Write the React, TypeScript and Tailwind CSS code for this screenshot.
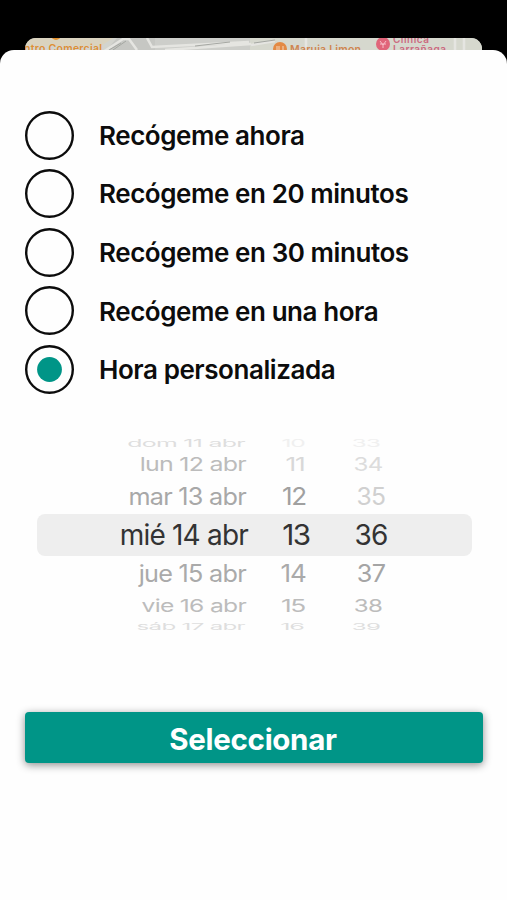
import React, { useState } from 'react';
import clsx from 'clsx';

const options = [
  'Recógeme ahora',
  'Recógeme en 20 minutos',
  'Recógeme en 30 minutos',
  'Recógeme en una hora',
  'Hora personalizada',
];

// Rows get shorter and flatter towards the edges of the wheel
const wheelRows = [
  { day: 'dom 11 abr', hour: '10', minute: '33', row: 'h-[14px]', dayClass: 'scale-x-[0.89] scale-y-[0.38] -translate-x-[3px] text-[#dedede]', hourClass: 'scale-x-[0.88] scale-y-[0.38] -translate-x-[3px] text-[#f0f0f0]', minuteClass: 'scale-x-[0.86] scale-y-[0.38] -translate-x-[5px] text-[#f0f0f0]' },
  { day: 'lun 12 abr', hour: '11', minute: '34', row: 'h-7', dayClass: 'scale-x-[0.89] scale-y-[0.66] -translate-x-0.5 text-[#bcbcbc]', hourClass: 'scale-x-[0.94] scale-y-[0.66] -translate-x-px text-[#d8d8d8]', minuteClass: 'scale-x-[0.86] scale-y-[0.66] -translate-x-[3px] text-[#dcdcdc]' },
  { day: 'mar 13 abr', hour: '12', minute: '35', row: 'h-9', dayClass: 'scale-x-[0.9] scale-y-[0.85] -translate-x-0.5 text-[#a8a8a8]', hourClass: 'scale-x-[0.93] scale-y-[0.85] -translate-x-[2px] text-[#a0a0a0]', minuteClass: 'scale-x-[0.88] scale-y-[0.85] text-[#d0d0d0]' },
  { day: 'mié 14 abr', hour: '13', minute: '36', row: 'h-[42px] rounded-[8px] bg-[#eeeeee]', dayClass: 'text-[#333333]', hourClass: 'scale-x-[1.06] text-[#333333]', minuteClass: 'text-[#333333]' },
  { day: 'jue 15 abr', hour: '14', minute: '37', row: 'h-9', dayClass: 'scale-x-[0.9] scale-y-[0.85] -translate-x-0.5 text-[#aaaaaa]', hourClass: 'scale-x-[0.93] scale-y-[0.85] -translate-x-[3px] text-[#aaaaaa]', minuteClass: 'scale-x-[0.9] scale-y-[0.85] text-[#a5a5a5]' },
  { day: 'vie 16 abr', hour: '15', minute: '38', row: 'h-7', dayClass: 'scale-x-[0.88] scale-y-[0.63] -translate-x-0.5 text-[#bcbcbc]', hourClass: 'scale-x-[0.94] scale-y-[0.63] -translate-x-[3px] text-[#bcbcbc]', minuteClass: 'scale-x-[0.86] scale-y-[0.63] -translate-x-[3px] text-[#bcbcbc]' },
  { day: 'sáb 17 abr', hour: '16', minute: '39', row: 'h-[14px]', dayClass: 'scale-x-[0.86] scale-y-[0.34] -translate-x-[3px] text-[#dedede]', hourClass: 'scale-x-[0.9] scale-y-[0.34] -translate-x-1 text-[#dedede]', minuteClass: 'scale-x-[0.86] scale-y-[0.34] -translate-x-[5px] text-[#dedede]' },
];

function MapStrip() {
  return (
    <svg className="block h-6 w-[457px] rounded-t-[11px]" viewBox="0 0 457 24" aria-hidden="true">
      <rect width="457" height="24" fill="#d3d4ce" />
      <path d="M0 0H88L76 8H0Z" fill="#dad3bf" />
      <path d="M92 0H225V8L138 16L80 14Z" fill="#c6c7c3" />
      <path d="M130 0H225V14H130Z" fill="#cdceca" />
      <path d="M225 0H457V24H225Z" fill="#d6d8ce" />
      <g fill="none" stroke="#e5e5e1" strokeWidth="2.5">
        <path d="M78 14L98 1H104L112 12M122 0L127 9L224 4M140 12L226 6" />
        <path d="M226 7L250 3M281 0V12M430 0V12M439 0V12" />
      </g>
      <path d="M84 12L96 5M88 12L101 3M170 8L205 4M229 5L250 2" stroke="#a5a7a2" strokeWidth="1" fill="none" />
      <circle cx="31" cy="-3" r="5" fill="#e0902f" />
      <text x="-1" y="14" fill="#de8f35" fontFamily="Inter, sans-serif" fontSize="10.5" fontWeight="600" textLength="78">ntro Comercial</text>
      <circle cx="255" cy="11" r="7" fill="#e38a45" />
      <path d="M252 8V13M254 8V13M258 8V13" stroke="#f5d6bd" />
      <text x="265" y="15" fill="#cf8550" fontFamily="Inter, sans-serif" fontSize="10.5" fontWeight="600" textLength="71">Maruja Limon</text>
      <circle cx="358" cy="6" r="7" fill="#e0657a" />
      <path d="M355 3L358 7L361 3M358 7V10M355 6H361" stroke="#f7bdc7" fill="none" />
      <g fill="#cc6a80" fontFamily="Inter, sans-serif" fontSize="10" fontWeight="600">
        <text x="368" y="4.5" textLength="36">Clínica</text>
        <text x="368" y="15" textLength="53">Larrañaga</text>
      </g>
    </svg>
  );
}

export default function App() {
  const [selected, setSelected] = useState(4);

  return (
    <div className="h-[900px] w-[507px] overflow-hidden bg-black font-['Inter',sans-serif]">
      <div className="px-[25px] pt-[38px]">
        <MapStrip />
      </div>

      <div className="relative -mt-3 h-[850px] rounded-t-[14px] bg-[#fefefe] px-[25px] pt-[60.5px]">
        <div className="flex flex-col gap-[9.65px]" role="radiogroup">
          {options.map((label, i) => (
            <button
              key={label}
              role="radio"
              aria-checked={selected === i}
              onClick={() => setSelected(i)}
              className="flex h-[49px] items-center gap-[25px] text-left"
            >
              <svg className="size-[49px] shrink-0" viewBox="0 0 49 49" aria-hidden="true">
                <circle cx="24.5" cy="24.5" r="23.3" fill="none" stroke="#0c0c0c" strokeWidth="2.4" />
                {selected === i && <circle cx="24.5" cy="24.5" r="12.4" fill="#009587" />}
              </svg>
              <span className="pt-[1.5px] text-[26px] leading-8 font-semibold tracking-[-0.43px] whitespace-nowrap text-[#0c0c0c]">
                {label}
              </span>
            </button>
          ))}
        </div>

        <div className="mr-2.5 ml-3 mt-[41.9px] h-[198px] overflow-hidden">
          {wheelRows.map((item) => (
            <div key={item.day} className={clsx('flex items-center text-[28px] leading-none whitespace-nowrap', item.row)}>
              <span className={clsx('w-[211px] origin-right text-right tracking-[-0.8px]', item.dayClass)}>{item.day}</span>
              <span className={clsx('ml-7 w-10 text-center tracking-[-1.4px]', item.hourClass)}>{item.hour}</span>
              <span className={clsx('ml-[35px] w-10 text-center tracking-[-0.8px]', item.minuteClass)}>{item.minute}</span>
            </div>
          ))}
        </div>

        <button className="mt-[78px] flex h-[51.5px] w-[458px] items-center justify-center rounded-[4px] bg-[#009587] pr-0.5 pt-[3px] text-[29.5px] font-bold tracking-[-0.3px] text-white shadow-[0_2px_8px_rgba(0,0,0,0.45)]">
          Seleccionar
        </button>
      </div>
    </div>
  );
}
